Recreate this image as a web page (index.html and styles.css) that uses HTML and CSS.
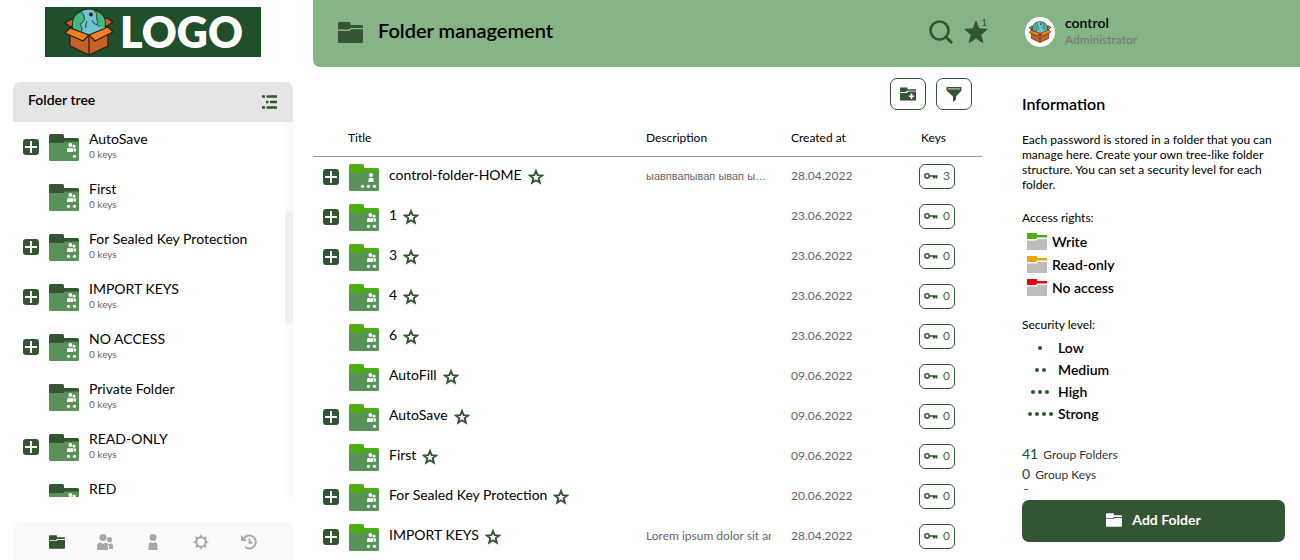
FILE: index.html
```html
<!DOCTYPE html>
<html lang="en">
<head>
<meta charset="utf-8">
<title>Folder management</title>
<link rel="stylesheet" href="styles.css">
</head>
<body>
<svg class="sprite" aria-hidden="true">
  <symbol id="box" viewBox="0 0 50 48">
    <g stroke="#2a1a10" stroke-width="1.2" stroke-linejoin="round">
      <path d="M7 11 1 15 8 20 6 22 24 16Z M43 10 49 14 43 18 44 21 26 16Z" fill="#c4622a"/>
      <path d="M6 19 25 10 44 19 26 30Z" fill="#8b421b"/>
      <circle cx="25" cy="17.500" r="16.500" fill="#6cc5d1"/>
      <path d="M17 3.500C10 6 7 13 9 22L14 27C20 24 18 19 16 16 20 15 23 9 17 3.500Z M30 2.500C35 6 31 10 34 14 31 18 36 17 37 21L41 20C43 10 38 4 30 2.500Z" fill="#43b982" stroke-width=".8"/>
      <path d="M23 13q-2 4-1 7M28 12q1 4 5 5" fill="none" stroke-width=".8"/>
      <circle cx="27" cy="6.500" r="1.300" fill="#2a1a10"/>
      <path d="M6 20 25 28 44 20V38L25 47 6 38Z" fill="#c4622a"/>
      <path d="M9 22Q12 29 18 26L25 29 36 24 41 21V19Q33 20 31 17 29 24 24 25Z" fill="#6cc5d1" stroke="none"/>
      <path d="M25 28V47" fill="none"/>
      <path d="M6 20 1 25 19 33 25 27Z M44 19 49 24 31 33 25 27Z" fill="#ef8122"/>
    </g>
  </symbol>
  <symbol id="people" viewBox="0 0 16 16">
    <circle cx="6" cy="3.500" r="3.500"/><path d="M0 16v-3.500Q0 8.500 3.500 8.500L6 10 8.500 8.500Q11 9 11 12v4Z"/>
    <circle cx="12.500" cy="5.700" r="2.600"/><path d="M10 9.500q3 1 4.500-.2Q16 10 16 12v3h-4v-3q0-1.500-2-2.500Z"/>
  </symbol>
  <symbol id="person" viewBox="0 0 16 16">
    <circle cx="8" cy="3.500" r="3.500"/><path d="M3.500 16v-4Q3.500 8.500 6 8.300q2 1.200 4 0 2.500.2 2.500 3.700v4Z"/>
  </symbol>
  <symbol id="folder-base" viewBox="0 0 30 27">
    <path d="M1.500 4H28.500Q30 4 30 5.500V10H0V5.500Z" fill="currentColor"/>
    <path d="M0 7.600H30V25.500Q30 27 28.500 27H1.500Q0 27 0 25.500Z" fill="#599259"/>
    <path d="M1.500 0H13.500Q15 0 15 1.500V9H0V1.500Q0 0 1.500 0Z" fill="currentColor"/>
  </symbol>
  <symbol id="group1" viewBox="0 0 30 27"><use href="#folder-base" width="30" height="27"/>
    <g fill="#fff"><use href="#people" x="18" y="9" width="9" height="9"/><circle cx="25.500" cy="22.300" r="1.600"/></g></symbol>
  <symbol id="group2" viewBox="0 0 30 27"><use href="#folder-base" width="30" height="27"/>
    <g fill="#fff"><use href="#people" x="18" y="9" width="9" height="9"/><circle cx="19.500" cy="22.300" r="1.600"/><circle cx="25.500" cy="22.300" r="1.600"/></g></symbol>
  <symbol id="private3" viewBox="0 0 30 27"><use href="#folder-base" width="30" height="27"/>
    <g fill="#fff"><use href="#person" x="17.500" y="9" width="9" height="9"/><circle cx="13.500" cy="22.300" r="1.600"/><circle cx="19.500" cy="22.300" r="1.600"/><circle cx="25.500" cy="22.300" r="1.600"/></g></symbol>
  <symbol id="plus" viewBox="0 0 16 16"><rect width="16" height="16" rx="3" fill="#335533"/><path d="M8 2V14M2 8H14" stroke="#fff" stroke-width="2"/></symbol>
  <symbol id="folder" viewBox="0 0 25 21">
    <path d="M1.500 0H11Q12.500 0 12.500 1.500V3H23.500Q25 3 25 4.500V6H12.500L10.500 7.600H0V1.500Q0 0 1.500 0Z"/>
    <path d="M0 9H11.500L13.500 7.300H25V19.500Q25 21 23.500 21H1.500Q0 21 0 19.500Z"/>
  </symbol>
  <symbol id="star" viewBox="0 0 24 24"><path d="M12 0 15.300 8.300 24 9 17.400 14.700 19.500 23.300 12 18.700 4.500 23.300 6.600 14.700 0 9 8.700 8.300Z"/></symbol>
  <symbol id="star-o" viewBox="0 0 16 16"><path d="M8 2 9.700 6.200 14.100 6.500 10.700 9.300 11.800 13.700 8 11.300 4.200 13.700 5.300 9.300 1.900 6.500 6.300 6.200Z" fill="none" stroke="#335533" stroke-width="1.900"/></symbol>
  <symbol id="key" viewBox="0 0 14 8"><circle cx="3" cy="4" r="2.200" fill="none" stroke="#335533" stroke-width="1.500"/><path d="M5 3.200H13.500V6.500H12V5.500H11V6.500H9V4.800H5Z" fill="#335533"/></symbol>
  <symbol id="access" viewBox="0 0 20 17">
    <path d="M0 0H10V2H20V4.500H10L9 6H0Z" fill="currentColor"/><path d="M0 7.500H9.500L11 6H20V17H0Z" fill="#bdbdbd"/>
  </symbol>
</svg>

<div class="app">
  <div class="sidebar">
    <a class="logo" href="#" aria-label="Logo"><svg class="logo-mark"><use href="#box"/></svg><span>LOGO</span></a>
    <div class="tree-head">
      <h2>Folder tree</h2>
      <button class="plain" aria-label="Toggle tree"><svg class="i16" viewBox="0 0 16 16"><path d="M0 2.500H3M4.500 2.500H15M4 8H6.500M8 8H15M0 13.500H3M4.500 13.500H15" stroke="#335533" stroke-width="2.500"/></svg></button>
    </div>
    <div class="tree">
      <ul class="tree-list">
        <li><button class="plain exp" aria-label="Expand"><svg class="i16"><use href="#plus"/></svg></button><svg class="fold"><use href="#group1"/></svg><a href="#">AutoSave<small>0 keys</small></a></li>
        <li><span class="exp"></span><svg class="fold"><use href="#group2"/></svg><a href="#">First<small>0 keys</small></a></li>
        <li><button class="plain exp" aria-label="Expand"><svg class="i16"><use href="#plus"/></svg></button><svg class="fold"><use href="#group2"/></svg><a href="#">For Sealed Key Protection<small>0 keys</small></a></li>
        <li><button class="plain exp" aria-label="Expand"><svg class="i16"><use href="#plus"/></svg></button><svg class="fold"><use href="#group2"/></svg><a href="#">IMPORT KEYS<small>0 keys</small></a></li>
        <li><button class="plain exp" aria-label="Expand"><svg class="i16"><use href="#plus"/></svg></button><svg class="fold"><use href="#group2"/></svg><a href="#">NO ACCESS<small>0 keys</small></a></li>
        <li><span class="exp"></span><svg class="fold"><use href="#group2"/></svg><a href="#">Private Folder<small>0 keys</small></a></li>
        <li><button class="plain exp" aria-label="Expand"><svg class="i16"><use href="#plus"/></svg></button><svg class="fold"><use href="#group2"/></svg><a href="#">READ-ONLY<small>0 keys</small></a></li>
        <li><span class="exp"></span><svg class="fold"><use href="#group2"/></svg><a href="#">RED<small>0 keys</small></a></li>
      </ul>
      <div class="track"><div class="thumb"></div></div>
    </div>
    <nav class="bottom-nav">
      <a class="active" href="#" aria-label="Folders"><svg class="i16"><use href="#folder"/></svg></a>
      <a href="#" aria-label="Groups"><svg class="i16"><use href="#people"/></svg></a>
      <a href="#" aria-label="Users"><svg class="i16"><use href="#person"/></svg></a>
      <a href="#" aria-label="Settings"><svg class="i16" viewBox="0 0 16 16"><circle cx="8" cy="8" r="4.700" fill="none" stroke="currentColor" stroke-width="2"/><path d="M6.500 3 8 0 9.500 3ZM6.500 13 8 16 9.500 13ZM3 6.500 0 8 3 9.500ZM13 6.500 16 8 13 9.500ZM3.300 5.400 2.200 2.200 5.400 3.300ZM12.700 5.400 13.800 2.200 10.600 3.300ZM3.300 10.600 2.200 13.800 5.400 12.700ZM12.700 10.600 13.800 13.800 10.600 12.700Z"/></svg></a>
      <a href="#" aria-label="History"><svg class="i16" viewBox="0 0 16 16"><path d="M2.500 5A6.500 6.500 0 1 1 4 12.900M8.500 4.500V8.800H11.500" fill="none" stroke="currentColor" stroke-width="1.900"/><path d="M0 1V7H6Z"/></svg></a>
    </nav>
  </div>

  <div class="main">
    <header class="topbar">
      <svg class="top-folder"><use href="#folder"/></svg>
      <h1>Folder management</h1>
      <button class="plain" aria-label="Search"><svg class="i24" viewBox="0 0 24 24"><circle cx="10.500" cy="10.500" r="9" fill="none" stroke="#335533" stroke-width="2.700"/><path d="M17 17 23 23" stroke="#335533" stroke-width="3"/></svg></button>
      <button class="plain fav" aria-label="Favourites"><svg class="i24"><use href="#star"/></svg><span class="badge">1</span></button>
      <div class="user">
        <span class="avatar"><svg><use href="#box"/></svg></span>
        <div class="who"><b>control</b><span>Administrator</span></div>
      </div>
    </header>

    <div class="body">
      <main class="content">
        <div class="tools">
          <button class="tool" aria-label="New folder"><svg class="i16" viewBox="0 0 16 16"><path d="M0 1.500H7.500V3.200H16V4.700H7L6 6H0ZM0 7H7L8 5.600H16V14.500H0Z"/><path d="M11.500 7.500V13M8.800 10.200H14.200" stroke="#fff" stroke-width="1.600"/></svg></button>
          <button class="tool" aria-label="Filter"><svg class="i16" viewBox="0 0 16 16"><path d="M.5 1H15.500V4.500L10 10.500V13.500L7 16V10.500L.5 4.500Z"/><path d="M2 2.900H14" stroke="#fff" stroke-width="1.200" opacity=".65"/></svg></button>
        </div>
        <table class="folders">
          <colgroup><col><col class="c-desc"><col class="c-date"><col class="c-keys"></colgroup>
          <thead><tr><th class="th-title">Title</th><th>Description</th><th>Created at</th><th class="th-keys">Keys</th></tr></thead>
          <tbody>
            <tr><td><div class="name"><button class="plain exp" aria-label="Expand"><svg class="i16"><use href="#plus"/></svg></button><svg class="fold"><use href="#private3"/></svg><a href="#">control-folder-HOME</a><button class="plain" aria-label="Favourite"><svg class="i16"><use href="#star-o"/></svg></button></div></td><td><div class="desc cyr">ыавпвапывап ывап ывап</div></td><td>28.04.2022</td><td><button class="keys"><svg><use href="#key"/></svg>3</button></td></tr>
            <tr><td><div class="name"><button class="plain exp" aria-label="Expand"><svg class="i16"><use href="#plus"/></svg></button><svg class="fold"><use href="#group2"/></svg><a href="#">1</a><button class="plain" aria-label="Favourite"><svg class="i16"><use href="#star-o"/></svg></button></div></td><td></td><td>23.06.2022</td><td><button class="keys"><svg><use href="#key"/></svg>0</button></td></tr>
            <tr><td><div class="name"><button class="plain exp" aria-label="Expand"><svg class="i16"><use href="#plus"/></svg></button><svg class="fold"><use href="#group2"/></svg><a href="#">3</a><button class="plain" aria-label="Favourite"><svg class="i16"><use href="#star-o"/></svg></button></div></td><td></td><td>23.06.2022</td><td><button class="keys"><svg><use href="#key"/></svg>0</button></td></tr>
            <tr><td><div class="name"><span class="exp"></span><svg class="fold"><use href="#group2"/></svg><a href="#">4</a><button class="plain" aria-label="Favourite"><svg class="i16"><use href="#star-o"/></svg></button></div></td><td></td><td>23.06.2022</td><td><button class="keys"><svg><use href="#key"/></svg>0</button></td></tr>
            <tr><td><div class="name"><span class="exp"></span><svg class="fold"><use href="#group2"/></svg><a href="#">6</a><button class="plain" aria-label="Favourite"><svg class="i16"><use href="#star-o"/></svg></button></div></td><td></td><td>23.06.2022</td><td><button class="keys"><svg><use href="#key"/></svg>0</button></td></tr>
            <tr><td><div class="name"><span class="exp"></span><svg class="fold"><use href="#group2"/></svg><a href="#">AutoFill</a><button class="plain" aria-label="Favourite"><svg class="i16"><use href="#star-o"/></svg></button></div></td><td></td><td>09.06.2022</td><td><button class="keys"><svg><use href="#key"/></svg>0</button></td></tr>
            <tr><td><div class="name"><button class="plain exp" aria-label="Expand"><svg class="i16"><use href="#plus"/></svg></button><svg class="fold"><use href="#group1"/></svg><a href="#">AutoSave</a><button class="plain" aria-label="Favourite"><svg class="i16"><use href="#star-o"/></svg></button></div></td><td></td><td>09.06.2022</td><td><button class="keys"><svg><use href="#key"/></svg>0</button></td></tr>
            <tr><td><div class="name"><span class="exp"></span><svg class="fold"><use href="#group2"/></svg><a href="#">First</a><button class="plain" aria-label="Favourite"><svg class="i16"><use href="#star-o"/></svg></button></div></td><td></td><td>09.06.2022</td><td><button class="keys"><svg><use href="#key"/></svg>0</button></td></tr>
            <tr><td><div class="name"><button class="plain exp" aria-label="Expand"><svg class="i16"><use href="#plus"/></svg></button><svg class="fold"><use href="#group2"/></svg><a href="#">For Sealed Key Protection</a><button class="plain" aria-label="Favourite"><svg class="i16"><use href="#star-o"/></svg></button></div></td><td></td><td>20.06.2022</td><td><button class="keys"><svg><use href="#key"/></svg>0</button></td></tr>
            <tr><td><div class="name"><button class="plain exp" aria-label="Expand"><svg class="i16"><use href="#plus"/></svg></button><svg class="fold"><use href="#group2"/></svg><a href="#">IMPORT KEYS</a><button class="plain" aria-label="Favourite"><svg class="i16"><use href="#star-o"/></svg></button></div></td><td><div class="desc clip">Lorem ipsum dolor sit amet</div></td><td>28.04.2022</td><td><button class="keys"><svg><use href="#key"/></svg>0</button></td></tr>
          </tbody>
        </table>
      </main>

      <aside class="info">
        <div class="info-scroll">
          <h2>Information</h2>
          <p>Each password is stored in a folder that you can manage here. Create your own tree-like folder structure. You can set a security level for each folder.</p>
          <h3>Access rights:</h3>
          <ul class="access">
            <li class="write"><svg><use href="#access"/></svg>Write</li>
            <li class="read"><svg><use href="#access"/></svg>Read-only</li>
            <li class="none"><svg><use href="#access"/></svg>No access</li>
          </ul>
          <h3>Security level:</h3>
          <ul class="levels">
            <li><span class="dots"><i></i></span>Low</li>
            <li><span class="dots"><i></i><i></i></span>Medium</li>
            <li><span class="dots"><i></i><i></i><i></i></span>High</li>
            <li><span class="dots"><i></i><i></i><i></i><i></i></span>Strong</li>
          </ul>
          <ul class="counts">
            <li><b>41</b>Group Folders</li>
            <li><b>0</b>Group Keys</li>
            <li><b>0</b></li>
          </ul>
        </div>
        <button class="add"><svg class="i16"><use href="#folder"/></svg>Add Folder</button>
      </aside>
    </div>
  </div>
</div>
</body>
</html>
```
FILE: styles.css
```css
* { box-sizing: border-box; }
body { margin: 0; background: #fff; color: #000; font: 14px/18px Lato, "Liberation Sans", sans-serif; }
h1, h2, h3, p, ul { margin: 0; padding: 0; font-weight: 400; }
ul { list-style: none; }
a { color: inherit; text-decoration: none; }
button { font: inherit; color: inherit; cursor: pointer; }
svg { display: block; flex: none; fill: currentColor; }
.sprite { position: absolute; width: 0; height: 0; }
.plain { padding: 0; border: 0; background: none; flex: none; }
.i16 { width: 16px; height: 16px; }
.i24 { width: 24px; height: 24px; }
.exp { width: 16px; height: 16px; flex: none; }
.fold { width: 30px; height: 27px; }

.app { display: flex; height: 100vh; overflow: hidden; }

.sidebar { flex: none; width: 280px; margin: 0 20px 0 13px; display: flex; flex-direction: column; }
.logo { display: flex; align-items: center; width: 216px; height: 50px; margin: 7px 0 25px 32px; padding-left: 19px; gap: 6px; background: #1f4f2b; color: #fff; font-size: 43px; line-height: 50px; font-weight: 800; }
.logo-mark { width: 50px; height: 48px; }
.tree-head { display: flex; justify-content: space-between; align-items: center; height: 40px; padding: 0 15px 1px; background: #e5e5e5; border-radius: 7px 7px 0 0; }
.tree-head h2 { font-size: 14px; font-weight: 600; padding-bottom: 3px; }
.tree { flex: 1; display: flex; min-height: 0; overflow: hidden; margin-bottom: 25px; }
.tree-list { flex: 1; color: #335533; }
.tree-list li { display: flex; align-items: center; gap: 10px; height: 50px; padding-left: 10px; }
.tree-list a { color: #000; padding-bottom: 5px; }
.tree-list small { display: block; font-size: 10px; line-height: 12px; color: #666; }
.track { width: 8px; background: #fbfbfb; padding-top: 89px; border-radius: 4px; }
.thumb { height: 113px; background: #f0f0f0; border-radius: 4px; }
.bottom-nav { display: flex; gap: 32px; height: 38px; padding: 12px 36px 0; background: #fafafa; border-radius: 7px 7px 0 0; color: #a8a8a8; }
.bottom-nav .active { color: #335533; }

.main { flex: 1; min-width: 0; display: flex; flex-direction: column; }
.topbar { display: flex; align-items: center; flex: none; height: 67px; padding: 0 0 3px 25px; background: #86b486; border-radius: 0 0 0 7px; color: #335533; }
.top-folder { width: 25px; height: 21px; }
.topbar h1 { flex: 1; margin-left: 15px; padding-bottom: 5px; font-size: 20px; line-height: 24px; font-weight: 600; color: #000; }
.fav { position: relative; margin: 0 37px 0 11px; }
.badge { position: absolute; right: 1px; top: -5px; font-size: 10px; line-height: 14px; }
.user { display: flex; align-items: center; gap: 10px; width: 275px; }
.avatar { display: flex; align-items: center; justify-content: center; width: 30px; height: 30px; border-radius: 50%; background: #fff; }
.avatar svg { width: 24px; height: 22px; }
.who { padding-bottom: 4px; }
.who b, .who span { display: block; font-size: 14px; line-height: 18px; font-weight: 600; color: #000; }
.who span { font-size: 12px; line-height: 15px; font-weight: 400; color: #777; }

.body { flex: 1; display: flex; gap: 40px; min-height: 0; padding-right: 15px; }
.content { flex: 1; min-width: 0; overflow: hidden; }
.tools { display: flex; justify-content: flex-end; gap: 10px; padding: 11px 10px 0 0; }
.tool { display: flex; align-items: center; justify-content: center; width: 36px; height: 32px; padding: 0; border: 1px solid #335533; border-radius: 7px; background: #fff; color: #335533; }
.folders { width: 100%; table-layout: fixed; border-collapse: separate; border-spacing: 0; }
.c-desc { width: 145px; }
.c-date { width: 128px; }
.c-keys { width: 63px; }
.folders th { height: 47px; padding: 10px 0 0; border-bottom: 1px solid #999; text-align: left; font-size: 12px; font-weight: 400; }
.folders .th-title { padding-left: 35px; }
.folders .th-keys { padding-left: 2px; }
.folders td { height: 40px; padding: 0; font-size: 12px; color: #666; }
.folders td + td { padding-bottom: 2px; }
.name { display: flex; align-items: center; padding-left: 10px; color: #4caf0f; font-size: 14px; }
.name .fold { margin: 0 10px; }
.name a { color: #000; padding-bottom: 5px; margin-right: 6px; }
.desc { width: 125px; overflow: hidden; white-space: nowrap; text-overflow: ellipsis; }
.desc.clip { text-overflow: clip; }
.desc.cyr { font-family: "Liberation Sans", sans-serif; font-size: 11px; }
.keys { display: flex; align-items: center; justify-content: space-between; width: 36px; height: 25px; padding: 0 4px; border: 1px solid #335533; border-radius: 6px; background: #fff; color: #555; }
.keys svg { width: 14px; height: 8px; }

.info { flex: none; width: 263px; display: flex; flex-direction: column; }
.info-scroll { flex: 1; min-height: 0; overflow: hidden; padding-top: 27px; }
.info h2 { font-size: 16px; line-height: 20px; font-weight: 600; }
.info p { margin: 18px 0; font-size: 12px; line-height: 15px; }
.info h3 { font-size: 12px; line-height: 15px; }
.access { margin: 5px 0 18px; font-weight: 600; }
.access li { display: flex; align-items: center; gap: 5px; height: 23px; padding-left: 5px; }
.access svg { width: 20px; height: 17px; }
.write svg { color: #4caf0f; }
.read svg { color: #f0a30a; }
.none svg { color: #e30613; }
.levels { margin: 5px 0 19px; font-weight: 600; }
.levels li { display: flex; align-items: center; gap: 5px; height: 22px; padding-left: 5px; }
.dots { display: flex; justify-content: center; gap: 3px; width: 26px; }
.dots i { width: 4px; height: 4px; border-radius: 50%; background: #335533; }
.counts li { height: 20px; font-size: 12px; line-height: 20px; color: #333; }
.counts b { margin-right: 5px; font-size: 14px; font-weight: 500; color: #335533; }
.add { display: flex; align-items: center; justify-content: center; gap: 10px; flex: none; height: 42px; margin: 10px 0 18px; padding: 0 0 3px; border: 0; border-radius: 7px; background: #335533; color: #fff; font-weight: 700; }
```
